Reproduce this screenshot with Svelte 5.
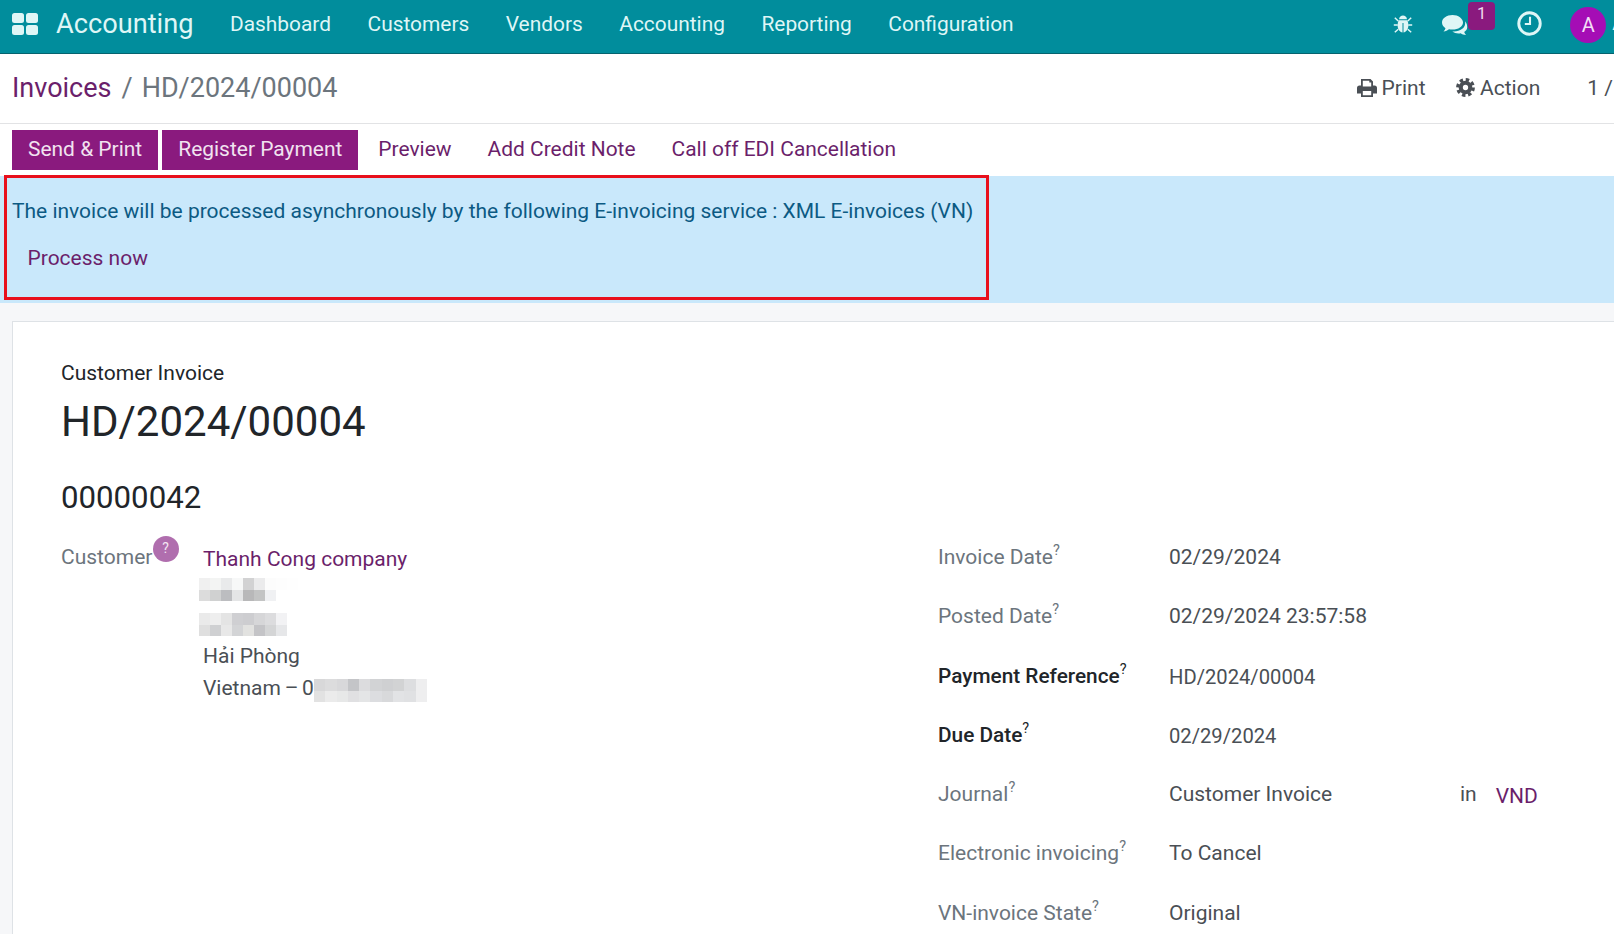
<script>
  const navItems = ['Dashboard', 'Customers', 'Vendors', 'Accounting', 'Reporting', 'Configuration'];
  const fields = [
    { label: 'Invoice Date', value: '02/29/2024' },
    { label: 'Posted Date', value: '02/29/2024 23:57:58' },
    { label: 'Payment Reference', value: 'HD/2024/00004', strong: true },
    { label: 'Due Date', value: '02/29/2024', strong: true },
    { label: 'Journal', value: 'Customer Invoice', extra: true },
    { label: 'Electronic invoicing', value: 'To Cancel' },
    { label: 'VN-invoice State', value: 'Original' }
  ];
  const blur1 = ['#f0f0f0','#f3f4f3','#e9eaeb','#f7f8f8','#d2d2d3','#ebebec','#fcfcfc','#fdfdfd','#fefefe',
                 '#dcdcdc','#d0d1d1','#bcbdc0','#e4e5e6','#b8b8b9','#c3c4c4','#f0f1f3','#ffffff','#ffffff'];
  const blur2 = ['#eaeaea','#eeeeee','#e4e4e4','#cfcfd2','#cdcdd0','#d6d6d8','#dcdcde','#f2f2f4',
                 '#dfdfdf','#cfd0d2','#e8e8e8','#d3d4d6','#e2e2e0','#c4c4c7','#d4d5d6','#e6e7e9'];
  const blur3 = ['#d8d8d9','#dcdcdd','#d8d8da','#c4c5c8','#dcdcde','#d2d3d5','#cfd0d2','#d2d3d4','#dddee0','#eeeeef',
                 '#e2e2e2','#ebebeb','#e7e8e8','#e0e0e2','#e4e5e6','#dcdde0','#d8d9db','#e2e3e5','#e0e1e3','#eeeeef'];
</script>

<div class="page">
  <header class="navbar">
    <svg class="apps" viewBox="0 0 26 22" aria-hidden="true">
      <rect x="0" y="0" width="12" height="10" rx="2.5" />
      <rect x="14" y="0" width="12" height="10" rx="2.5" />
      <rect x="0" y="12" width="12" height="10" rx="2.5" />
      <rect x="14" y="12" width="12" height="10" rx="2.5" />
    </svg>
    <span class="brand">Accounting</span>
    <nav class="menu">
      {#each navItems as item}
        <span>{item}</span>
      {/each}
    </nav>
    <div class="systray">
      <svg class="bug" viewBox="0 0 20 20" aria-hidden="true">
        <path d="M6 5.2C6.4 2.8 8 1.6 10 1.6s3.6 1.2 4 3.6z" />
        <path d="M5.6 6.2h8.8c.7 1.5 1 3.300 1 5.300 0 3.500-2.200 6.700-4.900 6.900V9h-1v9.400c-2.700-.2-4.900-3.400-4.900-6.900 0-2 .3-3.800 1-5.300z" />
        <path d="M1.800 3.800 5.200 7M18.200 3.800 14.800 7M.8 11h4M19.200 11h-4M1.800 18.200l3.400-3M18.200 18.200l-3.400-3" class="legs" />
      </svg>
      <span class="chat">
        <svg viewBox="0 0 28 22" aria-hidden="true">
          <path d="M11.500 1C5.700 1 1 4.300 1 8.500c0 2.300 1.400 4.300 3.500 5.700-.3 1.200-1 2.300-2 3.300 2.200-.2 4.100-1 5.500-2.200 1.100.2 2.300.3 3.500.3 5.800 0 10.500-3.200 10.500-7.100S17.300 1 11.500 1z" />
          <path d="M24 7.500c.2.600.2 1.100.2 1.700 0 4.700-5 8.200-11.200 8.200h-1.700c1.600 1.300 3.900 2 6.200 2 .7 0 1.500-.1 2.200-.2 1.400 1 3 1.500 5.300 1.800-.9-1-1.500-2-1.800-3 1.800-1.200 3-2.800 3-4.800 0-2.400-.7-4.300-2-5.700z" />
        </svg>
        <b class="badge">1</b>
      </span>
      <svg class="clock" viewBox="0 0 24 24" aria-hidden="true">
        <circle cx="12" cy="12" r="10.300" />
        <path d="M12.500 5.500v7H7.500" />
      </svg>
      <span class="avatar">A</span>
      <span class="username">A</span>
    </div>
  </header>

  <section class="control">
    <div class="crumbs">
      <a href="#invoices">Invoices</a>
      <span class="sep">/</span>
      <span class="current">HD/2024/00004</span>
    </div>
    <div class="actions">
      <span class="act print-act">
        <svg viewBox="0 0 20 18" aria-hidden="true">
          <path fill-rule="evenodd" d="M4 0h9.500L16 2.500V6.500h1.500A2.500 2.500 0 0 1 20 9v5.500h-4V18H4v-3.500H0V9a2.500 2.500 0 0 1 2.500-2.500H4zM5.800 1.800v5.700h8.400V3.500h-1.900V1.800zM5.800 12v4.200h8.400V12z" />
        </svg>
        Print
      </span>
      <span class="act action-act">
        <svg viewBox="0 0 20 20" aria-hidden="true">
          <circle class="cog-teeth" cx="10" cy="10" r="8.200" />
          <circle class="cog-ring" cx="10" cy="10" r="5" />
        </svg>
        Action
      </span>
      <span class="pager">1 /</span>
    </div>
  </section>

  <section class="status">
    <button class="btn primary">Send &amp; Print</button>
    <button class="btn primary">Register Payment</button>
    <button class="btn">Preview</button>
    <button class="btn">Add Credit Note</button>
    <button class="btn">Call off EDI Cancellation</button>
  </section>

  <section class="alert">
    <p>The invoice will be processed asynchronously by the following E-invoicing service : XML E-invoices (VN)</p>
    <a href="#process">Process now</a>
  </section>
  <div class="annotation"></div>

  <main class="body">
    <article class="sheet">
      <div class="kind">Customer Invoice</div>
      <h1>HD/2024/00004</h1>
      <h2>00000042</h2>
      <div class="columns">
        <div class="left">
          <div class="cust-label">Customer<span class="help">?</span></div>
          <div class="address">
            <a class="partner" href="#partner">Thanh Cong company</a>
            <div class="pixels p1">
              {#each blur1 as c}<i style:background={c}></i>{/each}
            </div>
            <div class="pixels p2">
              {#each blur2 as c}<i style:background={c}></i>{/each}
            </div>
            <div class="city">Hải Phòng</div>
            <div class="country">
              <span class="country-text">Vietnam – 0</span>
              <div class="pixels p3">
                {#each blur3 as c}<i style:background={c}></i>{/each}
              </div>
            </div>
          </div>
        </div>
        <div class="right">
          {#each fields as f}
            <div class="row">
              <div class="label" class:strong={f.strong}>{f.label}<sup>?</sup></div>
              <div class="value" class:low={f.strong}>
                <span class="val-text">{f.value}</span>
                {#if f.extra}
                  <span class="in">in</span><a class="cur" href="#vnd">VND</a>
                {/if}
              </div>
            </div>
          {/each}
        </div>
      </div>
    </article>
  </main>
</div>

<style>
  :global(body) {
    margin: 0;
    background: #f6f7f9;
  }
  .page {
    position: relative;
    width: 1614px;
    height: 934px;
    overflow: hidden;
    font-family: Roboto, "Liberation Sans", sans-serif;
    font-size: 21px;
    color: #4a4f55;
    background: #f6f7f9;
  }
  a { color: #6b1f6b; text-decoration: none; }

  .navbar {
    display: flex;
    align-items: center;
    height: 47px;
    padding-bottom: 6px;
    background: #018d9c;
    border-bottom: 1px solid #05636e;
    color: #dff6f6;
    box-sizing: content-box;
  }
  .apps {
    width: 26px;
    height: 22px;
    margin-left: 12px;
    fill: #dff6f6;
  }
  .brand {
    margin-left: 18px;
    font-size: 27.200px;
    width: 174px;
    flex: none;
  }
  .menu {
    display: flex;
    gap: 36.500px;
    font-size: 20.900px;
  }
  .systray {
    margin-left: auto;
    display: flex;
    align-items: center;
    flex: none;
    margin-right: -10px;
  }
  .bug {
    width: 20px;
    height: 20px;
    fill: #dff6f6;
  }
  .legs {
    fill: none;
    stroke: #dff6f6;
    stroke-width: 1.500;
  }
  .chat {
    position: relative;
    display: block;
    width: 28px;
    height: 22px;
    margin-left: 28px;
    margin-top: 2px;
  }
  .chat svg {
    width: 28px;
    height: 22px;
    fill: #dff6f6;
    display: block;
  }
  .badge {
    position: absolute;
    left: 27px;
    top: -12px;
    width: 27px;
    height: 28px;
    border-radius: 4px;
    background: #8a1a7e;
    color: #f0dcee;
    font-size: 16.500px;
    font-weight: 400;
    text-align: center;
    line-height: 24px;
  }
  .clock {
    width: 25px;
    height: 25px;
    margin-left: 48px;
    fill: none;
    stroke: #dff6f6;
    stroke-width: 2.800;
  }
  .clock path { stroke-width: 2; }
  .avatar {
    width: 36px;
    height: 36px;
    margin-left: 28px;
    margin-top: 2px;
    border-radius: 50%;
    background: #a50db5;
    color: #f3dff5;
    font-size: 20px;
    line-height: 36px;
    text-align: center;
    flex: none;
  }
  .username {
    margin-left: 6px;
    font-size: 18px;
  }

  .control {
    display: flex;
    align-items: center;
    height: 70px;
    padding: 0 0 2px 12px;
    background: #fff;
    border-bottom: 1px solid #e2e3e5;
    box-sizing: border-box;
  }
  .crumbs {
    display: flex;
    align-items: baseline;
    font-size: 27px;
    color: #6c757d;
  }
  .sep { margin: 0 9px 0 10px; }
  .actions {
    margin-left: auto;
    display: flex;
    align-items: center;
    flex: none;
    margin-right: 1px;
  }
  .act {
    display: flex;
    align-items: center;
    gap: 5px;
    color: #4a4f55;
  }
  .print-act svg {
    width: 20px;
    height: 18px;
    fill: #4a4f55;
  }
  .action-act {
    margin-left: 30.500px;
  }
  .action-act svg {
    width: 19px;
    height: 19px;
    fill: none;
  }
  .cog-teeth {
    stroke: #4a4f55;
    stroke-width: 3.400;
    stroke-dasharray: 3.600 2.840;
  }
  .cog-ring {
    stroke: #4a4f55;
    stroke-width: 4.400;
  }
  .pager {
    margin-left: 47px;
    white-space: pre;
  }

  .status {
    display: flex;
    align-items: flex-start;
    gap: 4px;
    height: 52px;
    padding: 6px 0 0 12px;
    background: #fff;
    box-sizing: border-box;
  }
  .btn {
    height: 40px;
    padding: 0 16px 2px;
    border: 0;
    background: none;
    color: #6b1f6b;
    font: inherit;
    font-size: 20.960px;
  }
  .btn.primary {
    background: #8a1a7e;
    color: #f1e3f0;
  }

  .alert {
    height: 127px;
    padding: 0 12px;
    background: #c9e8fb;
    color: #0c5a83;
    font-size: 20.990px;
    box-sizing: border-box;
  }
  .alert p {
    margin: 0;
    padding-top: 23px;
    line-height: 24px;
  }
  .alert a {
    display: block;
    margin-top: 23px;
    padding-left: 15.500px;
    line-height: 24px;
  }
  .annotation {
    position: absolute;
    left: 4px;
    top: 175px;
    width: 985px;
    height: 125px;
    border: 3px solid #e8101c;
    box-sizing: border-box;
  }

  .body {
    padding: 18px 0 0 12px;
  }
  .sheet {
    width: 1700px;
    height: 700px;
    padding: 38px 0 0 48px;
    background: #fff;
    border: 1px solid #dee2e6;
    box-sizing: border-box;
  }
  .kind {
    color: #212529;
    line-height: 26px;
  }
  h1 {
    margin: 11px 0 0;
    font-size: 42px;
    font-weight: 400;
    color: #212529;
    line-height: 50px;
  }
  h2 {
    margin: 31px 0 0;
    font-size: 31.200px;
    font-weight: 400;
    color: #212529;
    line-height: 40px;
  }
  .columns {
    display: flex;
    margin-top: 26px;
  }
  .left {
    display: flex;
    width: 877px;
    flex: none;
  }
  .cust-label {
    position: relative;
    width: 142px;
    flex: none;
    color: #6c757d;
    line-height: 26px;
  }
  .help {
    position: absolute;
    left: 91.500px;
    top: -8px;
    width: 26px;
    height: 26px;
    border-radius: 50%;
    background: #b06eae;
    color: #f3e6f2;
    font-size: 14px;
    line-height: 24px;
    text-align: center;
  }
  .address {
    padding-top: 2px;
    line-height: 26px;
  }
  .partner { display: block; }
  .pixels {
    display: grid;
    grid-auto-rows: 11.500px;
    grid-template-columns: repeat(var(--cols), 11px);
  }
  .pixels i { display: block; }
  .p1 { --cols: 9; margin: 6px 0 0 -4px; }
  .p2 { --cols: 8; margin: 12px 0 0 -4px; }
  .city { margin-top: 7px; }
  .country {
    display: flex;
    margin-top: 6px;
    height: 26px;
  }
  .country-text {
    white-space: pre;
    word-spacing: -1.500px;
  }
  .p3 {
    --cols: 10;
    grid-template-columns: repeat(10, 11.300px);
    margin-top: 4px;
  }

  .right { width: 700px; flex: none; margin-top: -1px; }
  .row {
    display: flex;
    height: 59.300px;
    line-height: 28px;
  }
  .label {
    width: 231px;
    flex: none;
    color: #6c757d;
  }
  .label.strong { color: #212529; font-weight: 500; font-size: 20.800px; height: 27px; }
  .label sup {
    font-size: 14.500px;
    font-weight: 400;
    line-height: 0;
    vertical-align: 9px;
  }
  .value { display: flex; }
  .value.low { padding-top: 1.500px; font-size: 20.200px; }
  .val-text { width: 291px; }
  .cur { margin-left: 19px; margin-top: 2px; }
</style>
